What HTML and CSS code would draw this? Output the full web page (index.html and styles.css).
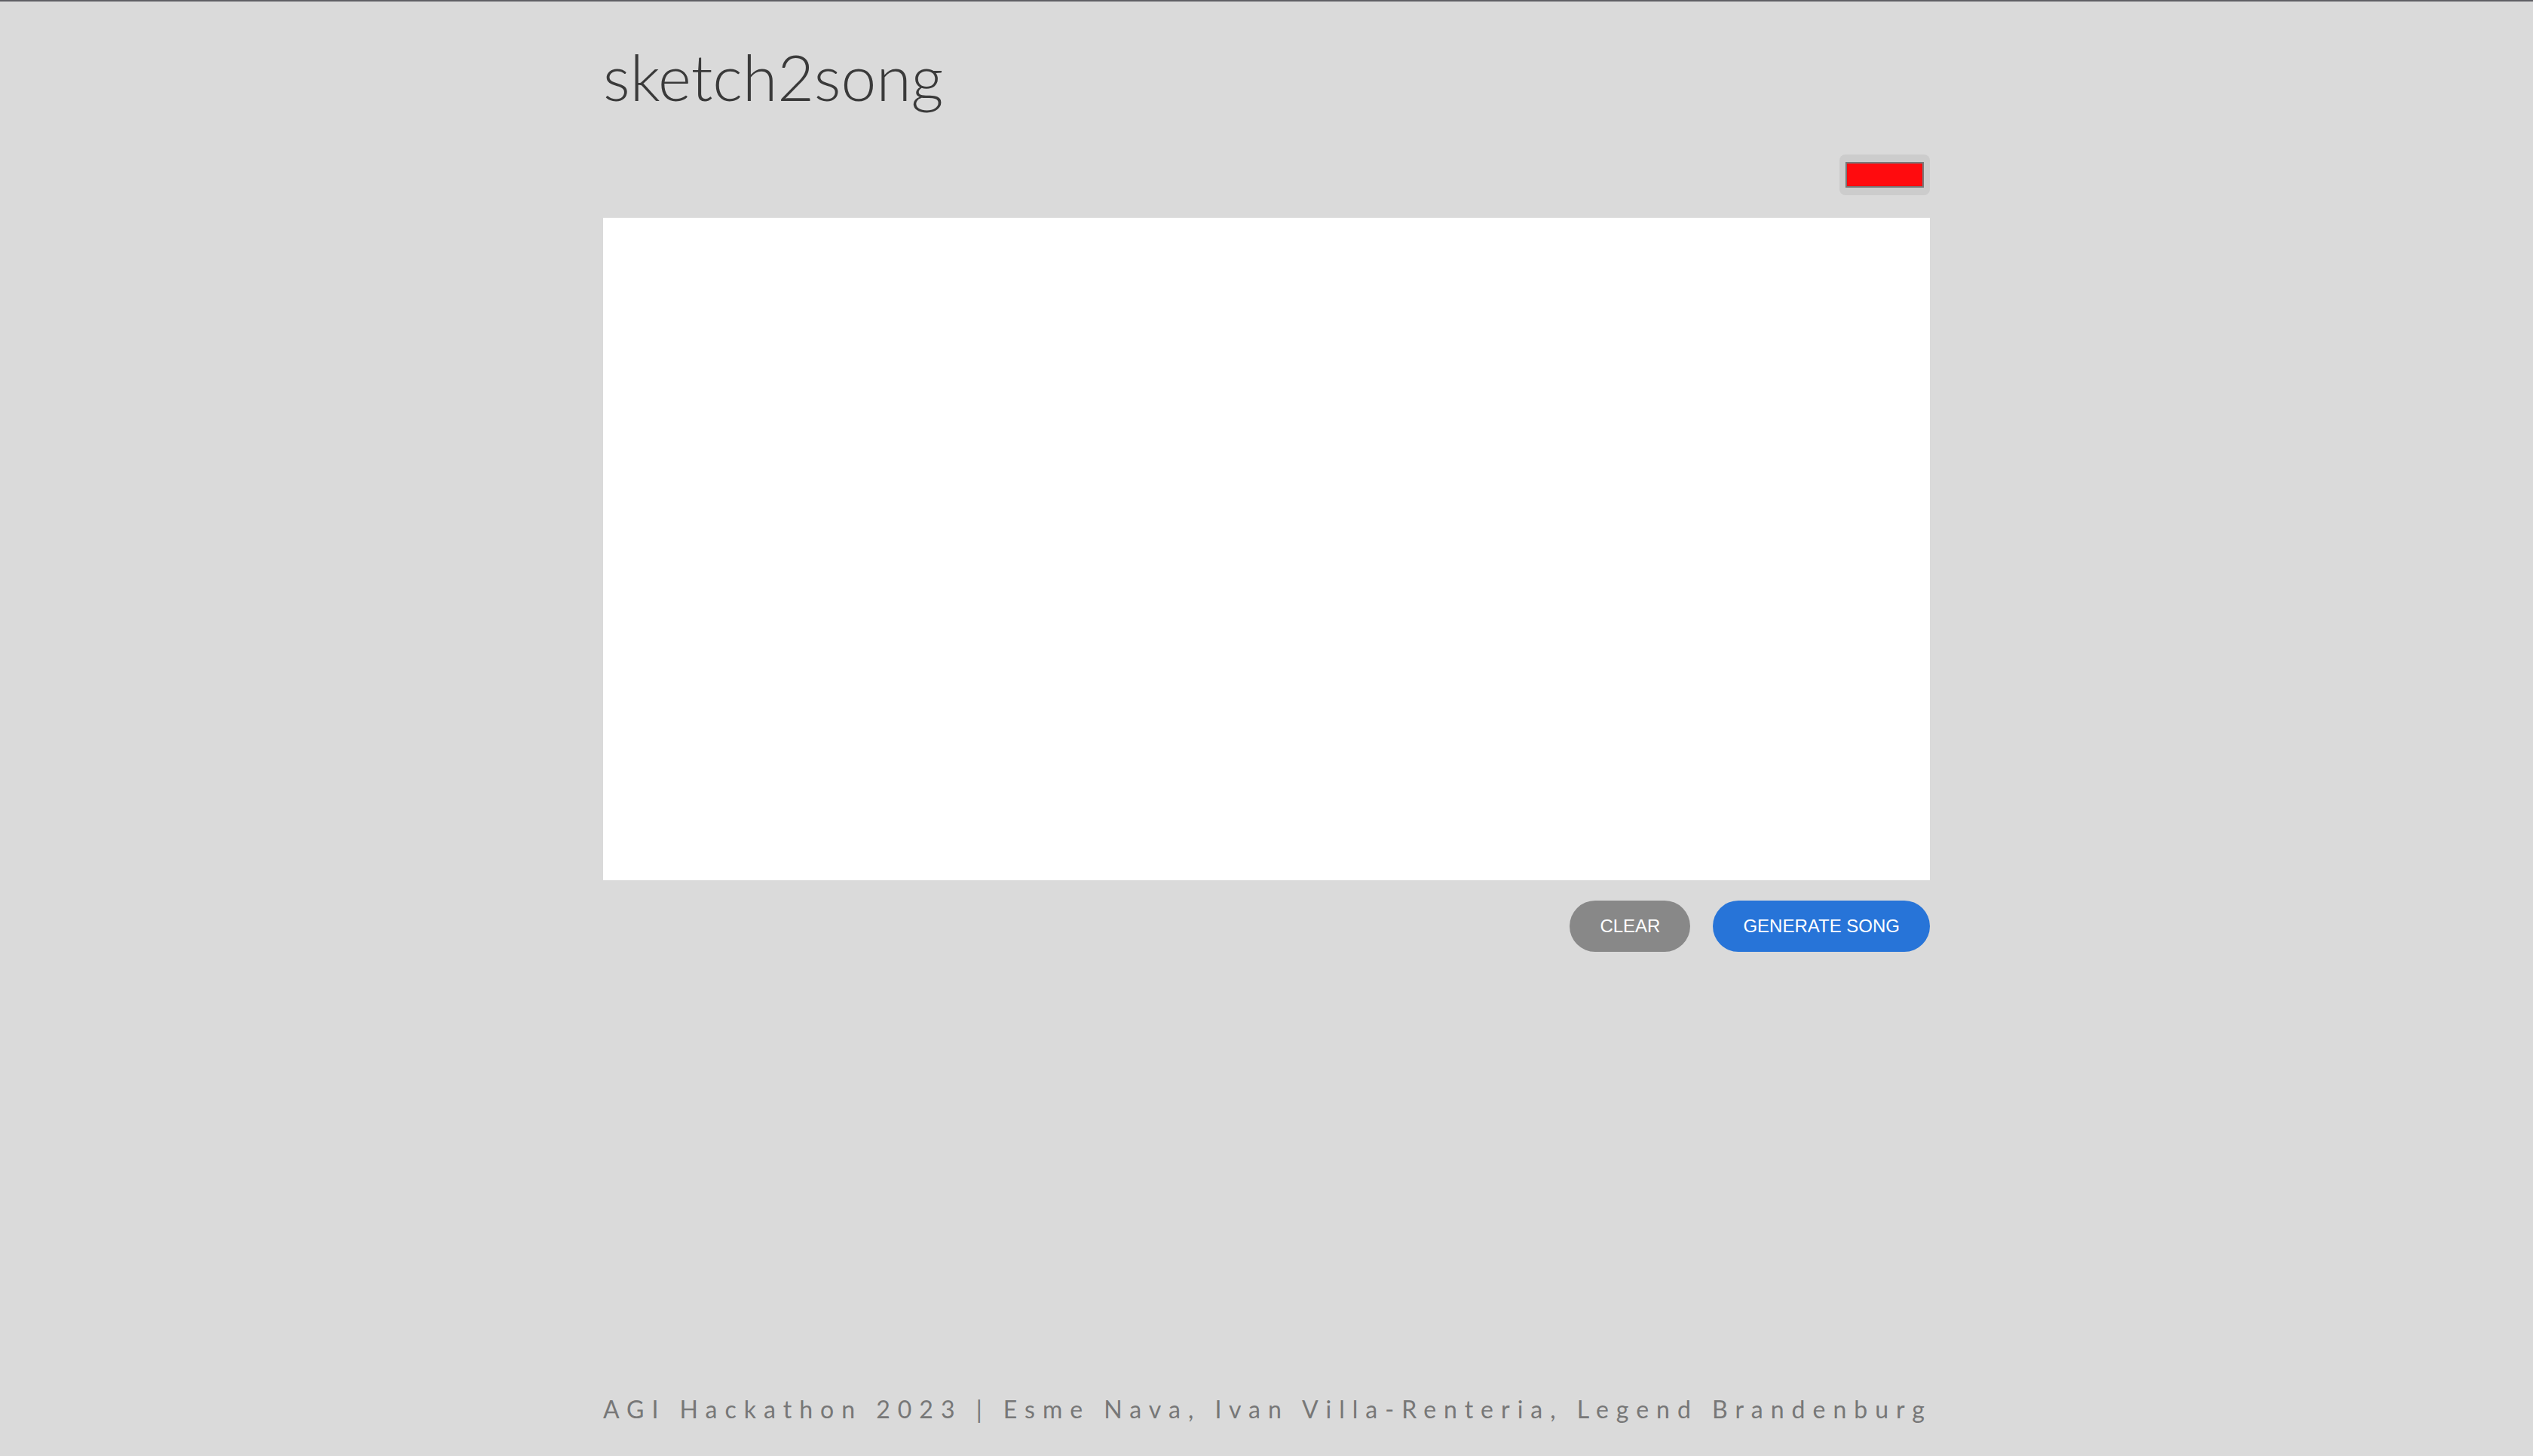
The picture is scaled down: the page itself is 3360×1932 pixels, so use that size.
FILE: index.html
```html
<!DOCTYPE html>
<html lang="en">
<head>
<meta charset="utf-8">
<title>sketch2song</title>
<link rel="stylesheet" href="styles.css">
</head>
<body>
<div class="page">
  <main class="main">
    <h1 class="title">sketch2song</h1>
    <div class="toolbar">
      <div class="picker"><div class="swatch"></div></div>
    </div>
    <div class="canvas"></div>
    <div class="actions">
      <button class="btn btn-clear">CLEAR</button>
      <button class="btn btn-generate">GENERATE SONG</button>
    </div>
  </main>
  <footer class="footer">AGI Hackathon 2023 | Esme Nava, Ivan Villa-Renteria, Legend Brandenburg</footer>
</div>
</body>
</html>
```
FILE: styles.css
```css
html, body {
  margin: 0;
  padding: 0;
}
body {
  background: #dadada;
  border-top: 2px solid #5f5f64;
  box-sizing: border-box;
  min-height: 100vh;
}
.page {
  min-height: calc(100vh - 2px);
  display: flex;
  flex-direction: column;
  align-items: center;
}
.main {
  width: 1760px;
}
.title {
  margin: 50px 0 0;
  font-family: Lato, "Noto Sans", sans-serif;
  font-weight: 300;
  font-size: 84px;
  line-height: 1.2;
  color: #3a3a3a;
}
.toolbar {
  display: flex;
  justify-content: flex-end;
  margin-top: 52px;
}
.picker {
  width: 120px;
  height: 54px;
  box-sizing: border-box;
  padding: 10px 8px;
  background: #cccccc;
  border-radius: 8px;
}
.swatch {
  width: 100%;
  height: 100%;
  box-sizing: border-box;
  border: 2px solid #777777;
  background: #ff0b0e;
}
.canvas {
  margin-top: 30px;
  height: 879px;
  background: #ffffff;
}
.actions {
  display: flex;
  justify-content: flex-end;
  gap: 30px;
  margin-top: 27px;
}
.btn {
  height: 68px;
  padding: 0 40px;
  border: none;
  border-radius: 34px;
  font-family: "Liberation Sans", Arial, sans-serif;
  font-size: 24px;
  color: #ffffff;
  cursor: pointer;
}
.btn-clear {
  background: #888888;
}
.btn-generate {
  background: #2774d8;
}
.footer {
  margin-top: auto;
  padding-bottom: 43px;
  width: 1760px;
  font-family: Lato, "Noto Sans", sans-serif;
  font-size: 32px;
  line-height: 1.2;
  letter-spacing: 10px;
  color: #777777;
  white-space: nowrap;
}
```
